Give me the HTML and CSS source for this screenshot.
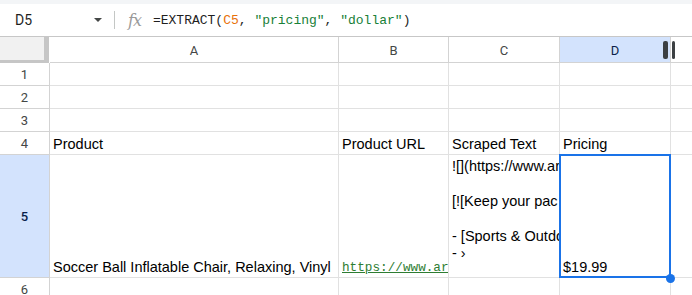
FILE: index.html
```html
<!DOCTYPE html>
<html>
  <head>
    <meta charset="UTF-8">
    <title>Sheet</title>
    <link rel="stylesheet" href="styles.css">
  </head>
  <body>
    <div class="formula-bar">
      <div class="name-box">D5<span class="caret"></span></div>
      <div class="sep"></div>
      <span class="fx">fx</span>
      <div class="formula">=EXTRACT(<span class="ref">C5</span>, <span class="str">"pricing"</span>, <span class="str">"dollar"</span>)</div>
    </div>

    <div class="sheet">
      <!-- column headers -->
      <div class="cell corner"></div>
      <div class="cell col-head">A</div>
      <div class="cell col-head">B</div>
      <div class="cell col-head">C</div>
      <div class="cell col-head active">D<span class="grip"></span><span class="grip thin"></span></div>
      <div class="cell col-head blank"></div>

      <!-- rows 1-3 -->
      <div class="cell row-head">1</div>
      <div class="cell"></div><div class="cell"></div><div class="cell"></div><div class="cell"></div><div class="cell blank"></div>
      <div class="cell row-head">2</div>
      <div class="cell"></div><div class="cell"></div><div class="cell"></div><div class="cell"></div><div class="cell blank"></div>
      <div class="cell row-head">3</div>
      <div class="cell"></div><div class="cell"></div><div class="cell"></div><div class="cell"></div><div class="cell blank"></div>

      <!-- row 4 -->
      <div class="cell row-head">4</div>
      <div class="cell text">Product</div>
      <div class="cell text">Product URL</div>
      <div class="cell text">Scraped Text</div>
      <div class="cell text">Pricing</div>
      <div class="cell blank"></div>

      <!-- row 5 -->
      <div class="cell row-head active">5</div>
      <div class="cell text">Soccer Ball Inflatable Chair, Relaxing, Vinyl</div>
      <div class="cell text"><span class="link">https://www.ar</span></div>
      <div class="cell text wrap">![](https://www.ar<br><br>[![Keep your pac<br><br>- [Sports &amp; Outdo<br>- ›</div>
      <div class="cell text selected">$19.99</div>
      <div class="cell blank"></div>

      <!-- row 6 -->
      <div class="cell row-head">6</div>
      <div class="cell"></div><div class="cell"></div><div class="cell"></div><div class="cell"></div><div class="cell blank"></div>
    </div>
  </body>
</html>
```

FILE: styles.css
```css
body {
  margin: 0;
  font-family: "Liberation Sans", Arial, sans-serif;
  background-color: white;
  color: #000;
  overflow: hidden;
}

.formula-bar {
  display: flex;
  align-items: center;
  border-top: 4px solid #f3f5f7;
  border-bottom: 1px solid #c7c7c7;
  box-sizing: border-box;
  height: 37px;
}

.name-box {
  width: 114px;
  display: flex;
  align-items: center;
  padding-left: 15px;
  box-sizing: border-box;
  font-family: Roboto, "Liberation Sans", sans-serif;
  font-size: 14px;
  color: #1f1f1f;
}

.caret {
  margin-left: 62px;
  width: 0;
  height: 0;
  border-left: 4px solid transparent;
  border-right: 4px solid transparent;
  border-top: 4px solid #444746;
}

.sep {
  width: 1px;
  height: 18px;
  background-color: #c4c7c5;
}

.fx {
  margin-left: 13px;
  font-family: "DejaVu Serif", serif;
  font-style: italic;
  font-size: 16px;
  color: #9a9a9a;
  letter-spacing: -1px;
}

.formula {
  margin-left: 12px;
  font-family: "Liberation Mono", "DejaVu Sans Mono", monospace;
  font-size: 13px;
  color: #1f1f1f;
}

.ref {
  color: #e8710a;
}

.str {
  color: #188038;
}

.sheet {
  display: grid;
  grid-template-columns: 50px 289px 110px 111px 111px 1fr;
  grid-template-rows: 26px 23px 23px 23px 23px 123px 23px;
}

.cell {
  border-right: 1px solid #e1e1e1;
  border-bottom: 1px solid #e1e1e1;
  box-sizing: border-box;
  overflow: hidden;
  white-space: nowrap;
  font-size: 14.5px;
}

.cell.blank {
  border-right: none;
}

.corner {
  background-color: #f1f1f1;
  border-right: 5px solid #c6c6c6;
  border-bottom: 3px solid #c6c6c6;
  margin-right: 1px;
}

.col-head,
.row-head {
  display: flex;
  align-items: center;
  justify-content: center;
  font-family: Roboto, "Liberation Sans", sans-serif;
  font-size: 13px;
  color: #444746;
  border-right-color: #d3d3d3;
  border-bottom-color: #d3d3d3;
}

.col-head {
  padding-top: 2px;
}

.col-head.active,
.row-head.active {
  background-color: #d3e3fd;
  color: #0b1f4a;
}

.row-head.active {
  font-weight: 500;
}

.col-head.active {
  position: relative;
  overflow: visible;
}

.grip {
  position: absolute;
  right: 2px;
  top: 4px;
  width: 5px;
  height: 18px;
  border-radius: 2px;
  background-color: #3c4043;
}

.grip.thin {
  right: -5px;
  width: 3px;
}

.text {
  display: flex;
  align-items: flex-end;
  padding: 0 3px 2px;
}

.text.wrap {
  display: block;
  padding-top: 3px;
  line-height: 17.4px;
}

.link {
  font-family: "Liberation Mono", "DejaVu Sans Mono", monospace;
  font-size: 12.7px;
  color: #2e7d32;
  text-decoration: underline;
}

.selected {
  position: relative;
  overflow: visible;
}

.selected::before {
  content: "";
  position: absolute;
  left: -1px;
  top: -1px;
  right: -1px;
  bottom: -1px;
  border: 2px solid #1a73e8;
}

.selected::after {
  content: "";
  position: absolute;
  right: -5px;
  bottom: -6px;
  width: 9px;
  height: 9px;
  border-radius: 50%;
  background-color: #1a73e8;
}
```
